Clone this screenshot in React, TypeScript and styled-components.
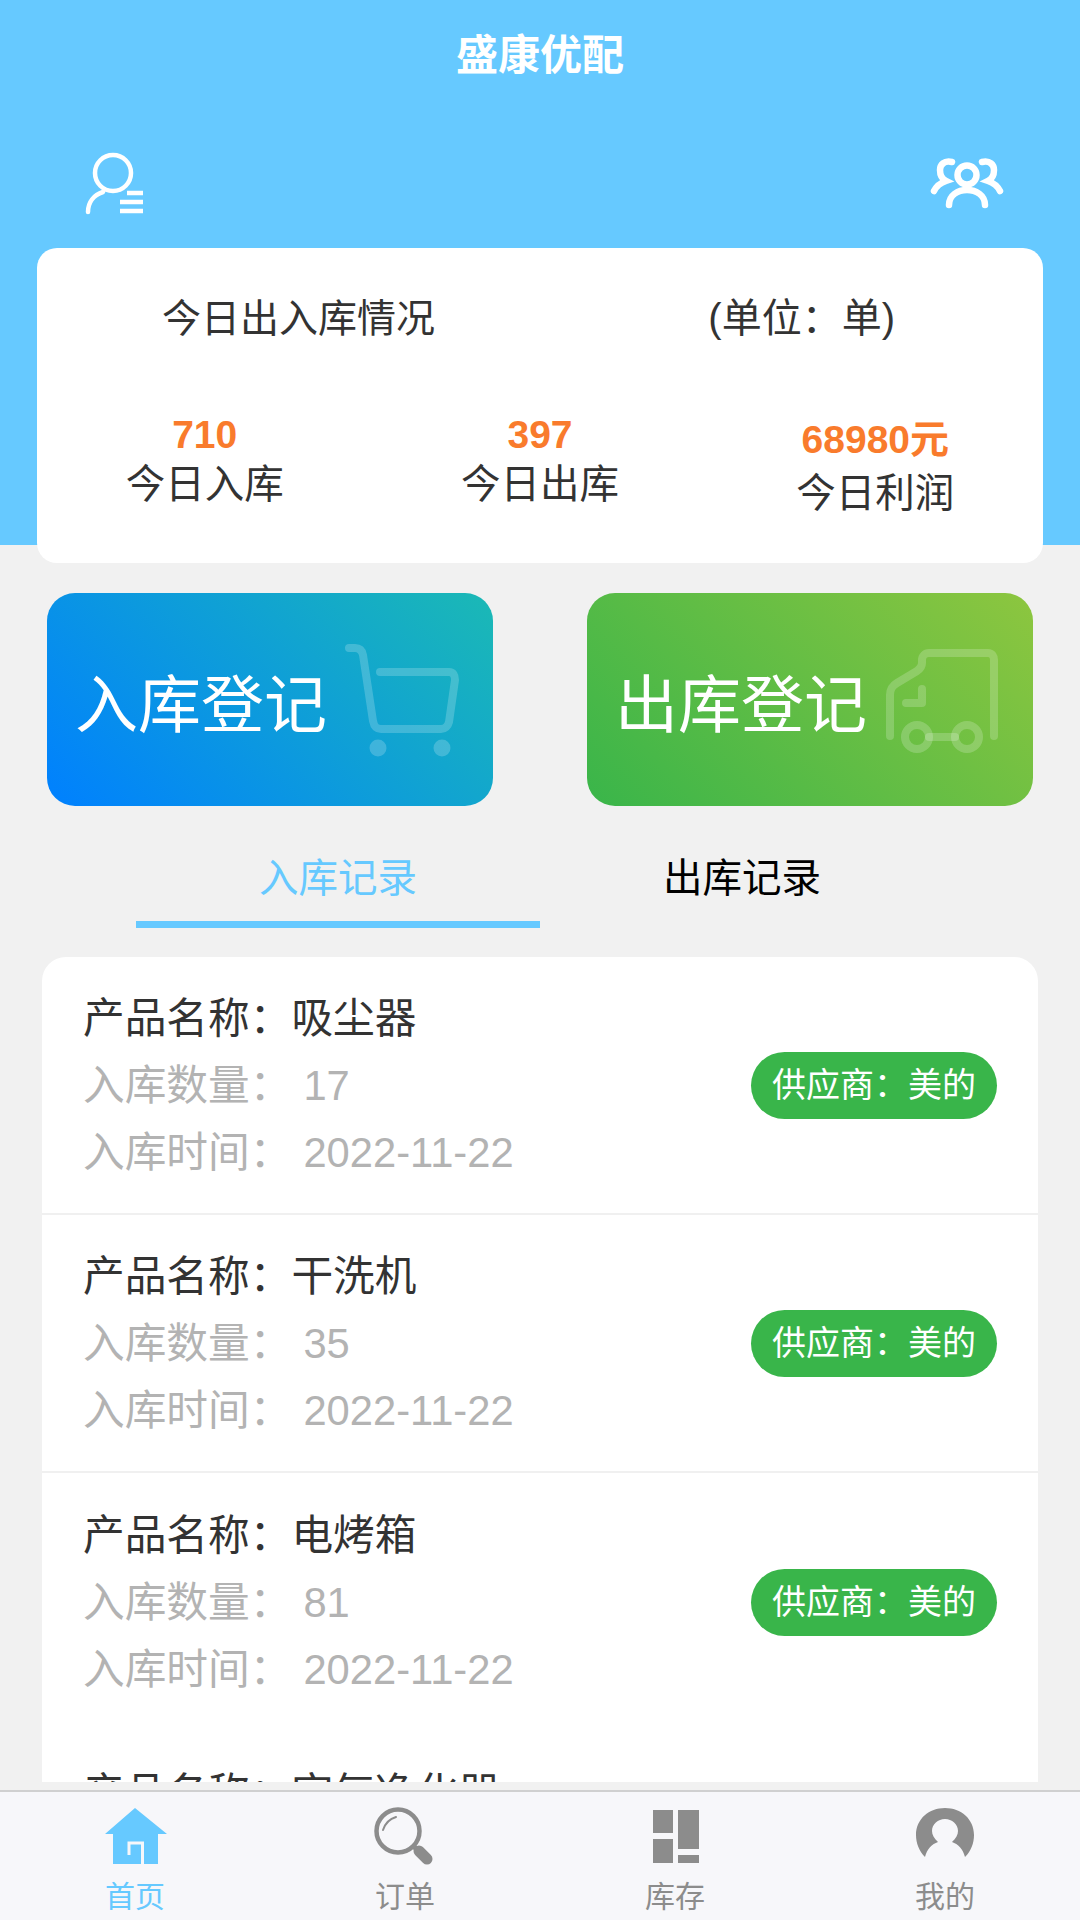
import React from "react";
import styled, { createGlobalStyle } from "styled-components";

const GlobalStyle = createGlobalStyle`
  html, body {
    margin: 0;
    padding: 0;
    background: #f1f1f1;
    font-family: "Liberation Sans", "Noto Sans CJK SC", sans-serif;
  }
  * {
    box-sizing: border-box;
  }
`;

const records = [
  { name: "吸尘器", count: "17" },
  { name: "干洗机", count: "35" },
  { name: "电烤箱", count: "81" },
  { name: "空气净化器", count: "26" },
];

const App: React.FC = () => {
  return (
    <Page>
      <GlobalStyle />
      <Title>盛康优配</Title>
      <HeaderIcons>
        <svg width="62" height="66" viewBox="0 0 62 66" fill="none" stroke="#fff" strokeLinecap="round">
          <circle cx="29" cy="23" r="18" strokeWidth="4.5" />
          <path d="M4 62C4 52 10 45 19 42" strokeWidth="4.5" />
          <path d="M43 43H59M36 52H59M36 61H59" strokeWidth="4.5" strokeLinecap="butt" />
        </svg>
        <svg width="74" height="56" viewBox="10 15 74 56" fill="none" stroke="#fff" strokeWidth="6.5" strokeLinecap="round">
          <circle cx="47" cy="35" r="9.5" />
          <path d="M29 65C29 55 38 50 47 50C56 50 65 55 65 65" />
          <path d="M32 22C24 20 20 25 20 30C20 35 22 39 26 41C20 43 16 47 14 51" />
          <path d="M62 22C70 20 74 25 74 30C74 35 72 39 68 41C74 43 78 47 80 51" />
        </svg>
      </HeaderIcons>
      <SummaryCard>
        <SummaryHead>
          <SummaryTitle>今日出入库情况</SummaryTitle>
          <SummaryUnit>(单位：单)</SummaryUnit>
        </SummaryHead>
        <Stats>
          <Stat>
            <StatValue>710</StatValue>
            <StatLabel>今日入库</StatLabel>
          </Stat>
          <Stat>
            <StatValue>397</StatValue>
            <StatLabel>今日出库</StatLabel>
          </Stat>
          <Stat $low>
            <StatValue>68980元</StatValue>
            <StatLabel>今日利润</StatLabel>
          </Stat>
        </Stats>
      </SummaryCard>
      <Actions>
        <ActionButton $from="#0080ff" $to="#1bb9b5">
          入库登记
          <svg width="135" height="130" viewBox="0 0 135 130" fill="none" stroke="#fff" strokeOpacity="0.2" strokeWidth="8" strokeLinecap="round" strokeLinejoin="round">
            <path d="M14 13H20C24 13 27 15 28 20L38 86C39 91 41 94 46 94H106C110 94 113 91 114 87L120 45C120 40 118 37 114 37H45" />
            <circle cx="43" cy="113" r="8.5" fill="#fff" fillOpacity="0.2" stroke="none" />
            <circle cx="107" cy="113" r="8.5" fill="#fff" fillOpacity="0.2" stroke="none" />
          </svg>
        </ActionButton>
        <ActionButton $from="#39b54a" $to="#8dc63f">
          出库登记
          <svg width="135" height="130" viewBox="0 0 135 130" fill="none" stroke="#fff" strokeOpacity="0.2" strokeWidth="8" strokeLinecap="round" strokeLinejoin="round">
            <path d="M15 101V60C15 54 17 51 22 48L42 36C45 34 47 32 47 28V25C47 21 50 18 54 18H113C117 18 119 21 119 25V101" />
            <path d="M47 54V68H31" />
            <circle cx="42" cy="102" r="12" />
            <circle cx="92" cy="102" r="12" />
            <path d="M54 102H80" />
          </svg>
        </ActionButton>
      </Actions>
      <Tabs>
        <Tab $active>入库记录</Tab>
        <Tab>出库记录</Tab>
      </Tabs>
      <RecordList>
        {records.map((record) => (
          <RecordRow key={record.name}>
            <RecordInfo>
              <RecordName>产品名称：{record.name}</RecordName>
              <RecordMeta>
                <span>入库数量：</span>
                <MetaValue>{record.count}</MetaValue>
              </RecordMeta>
              <RecordMeta>
                <span>入库时间：</span>
                <MetaValue>2022-11-22</MetaValue>
              </RecordMeta>
            </RecordInfo>
            <SupplierTag>供应商：美的</SupplierTag>
          </RecordRow>
        ))}
      </RecordList>
      <TabBar>
        <TabBarItem $active>
          <svg width="90" height="75" viewBox="0 0 90 75">
            <path d="M45 8L77 34H68V64H23V34H15L45 8Z" fill="#66c9ff" />
            <path d="M39 55V43H52.5V64" fill="none" stroke="#f7f7fa" strokeWidth="3" />
          </svg>
          首页
        </TabBarItem>
        <TabBarItem>
          <svg width="90" height="75" viewBox="0 0 90 75" fill="none" stroke="#8c8c8c">
            <circle cx="38" cy="31" r="21.5" strokeWidth="4.5" />
            <path d="M23 30C25 24 29 19 36 17" strokeWidth="2" strokeLinecap="round" />
            <path d="M53 46L58 50" strokeWidth="5" />
            <path d="M59 51L67 59" strokeWidth="11" strokeLinecap="round" />
          </svg>
          订单
        </TabBarItem>
        <TabBarItem>
          <svg width="90" height="75" viewBox="0 0 90 75" fill="#8c8c8c">
            <rect x="23" y="10" width="20" height="23" />
            <rect x="23" y="39" width="20" height="24" />
            <rect x="48" y="10" width="21" height="39" />
            <rect x="48" y="55" width="21" height="8" />
          </svg>
          库存
        </TabBarItem>
        <TabBarItem>
          <svg width="90" height="75" viewBox="0 0 90 75" fill="#8c8c8c">
            <path d="M25 57C19 51 16 43 16 35C16 19 29 8 45 8C61 8 74 19 74 35C74 43 71 51 65 57C63 49 58 44 52 42C56 38 58 35 58 31C58 24 52 19 45 19C38 19 32 24 32 31C32 35 34 38 38 42C32 44 27 49 25 57Z" />
          </svg>
          我的
        </TabBarItem>
      </TabBar>
    </Page>
  );
};

export default App;

const Page = styled.div`
  position: relative;
  display: flex;
  flex-direction: column;
  width: 1080px;
  height: 1920px;
  overflow: hidden;
  background: linear-gradient(#66c9ff 545px, #f1f1f1 545px);
`;

const Title = styled.h1`
  margin: 0;
  height: 112px;
  line-height: 112px;
  text-align: center;
  font-size: 42px;
  font-weight: 700;
  color: #fff;
`;

const HeaderIcons = styled.div`
  display: flex;
  justify-content: space-between;
  align-items: center;
  height: 136px;
  padding: 6px 76px 0 84px;
`;

const SummaryCard = styled.section`
  margin: 0 37px;
  height: 315px;
  background: #fff;
  border-radius: 20px;
  color: #333;
`;

const SummaryHead = styled.div`
  display: flex;
  height: 134px;
  padding: 0 148px 0 125px;
  justify-content: space-between;
  align-items: center;
`;

const SummaryTitle = styled.span`
  font-size: 39px;
`;

const SummaryUnit = styled.span`
  font-size: 40px;
`;

const Stats = styled.div`
  display: grid;
  grid-template-columns: repeat(3, 1fr);
  padding-top: 30px;
`;

const Stat = styled.div<{ $low?: boolean }>`
  display: flex;
  flex-direction: column;
  align-items: center;
  padding-top: ${(p) => (p.$low ? "5px" : "0")};
  gap: ${(p) => (p.$low ? "4px" : "0")};
`;

const StatValue = styled.span`
  line-height: 46px;
  font-size: 39px;
  font-weight: 700;
  color: #f97b2c;
`;

const StatLabel = styled.span`
  line-height: 52px;
  font-size: 39.5px;
`;

const Actions = styled.div`
  display: flex;
  justify-content: space-between;
  margin-top: 30px;
  padding: 0 47px;
`;

const ActionButton = styled.div<{ $from: string; $to: string }>`
  display: flex;
  align-items: center;
  justify-content: space-between;
  width: 446px;
  height: 213px;
  padding: 0 23px 0 28px;
  border-radius: 28px;
  background: linear-gradient(45deg, ${(p) => p.$from}, ${(p) => p.$to});
  font-size: 63px;
  color: #fff;
`;

const Tabs = styled.div`
  display: flex;
  margin-top: 36px;
  padding: 0 136px;
  height: 86px;
`;

const Tab = styled.div<{ $active?: boolean }>`
  flex: 1;
  padding-top: 11px;
  line-height: 50px;
  text-align: center;
  font-size: 39.5px;
  color: ${(p) => (p.$active ? "#66c9ff" : "#000")};
  border-bottom: 7px solid ${(p) => (p.$active ? "#66c9ff" : "transparent")};
`;

const RecordList = styled.div`
  margin: 29px 42px 0;
  height: 825px;
  overflow: hidden;
  background: #fff;
  border-radius: 24px 24px 0 0;
`;

const RecordRow = styled.div`
  display: flex;
  align-items: center;
  justify-content: space-between;
  height: 258px;
  padding: 0 41px;
  border-bottom: 2px solid #f0f0f0;

  &:nth-child(n + 3) {
    border-bottom: none;
  }
`;

const RecordInfo = styled.div`
  display: flex;
  flex-direction: column;
`;

const RecordName = styled.div`
  line-height: 67px;
  font-size: 41.7px;
  color: #333;
`;

const RecordMeta = styled.div`
  display: flex;
  line-height: 67px;
  font-size: 41.7px;
  color: #b3b3b3;
`;

const MetaValue = styled.span`
  margin-left: 12px;
`;

const SupplierTag = styled.div`
  height: 67px;
  padding: 0 21px;
  line-height: 67px;
  border-radius: 34px;
  background: #39b54a;
  font-size: 34px;
  color: #fff;
`;

const TabBar = styled.nav`
  position: absolute;
  left: 0;
  right: 0;
  bottom: 0;
  display: grid;
  grid-template-columns: repeat(4, 1fr);
  height: 130px;
  padding-top: 8px;
  background: #f7f7fa;
  border-top: 2px solid #d0d0d0;
`;

const TabBarItem = styled.div<{ $active?: boolean }>`
  display: flex;
  flex-direction: column;
  align-items: center;
  font-size: 30px;
  line-height: 44px;
  color: ${(p) => (p.$active ? "#66c9ff" : "#8c8c8c")};
`;
